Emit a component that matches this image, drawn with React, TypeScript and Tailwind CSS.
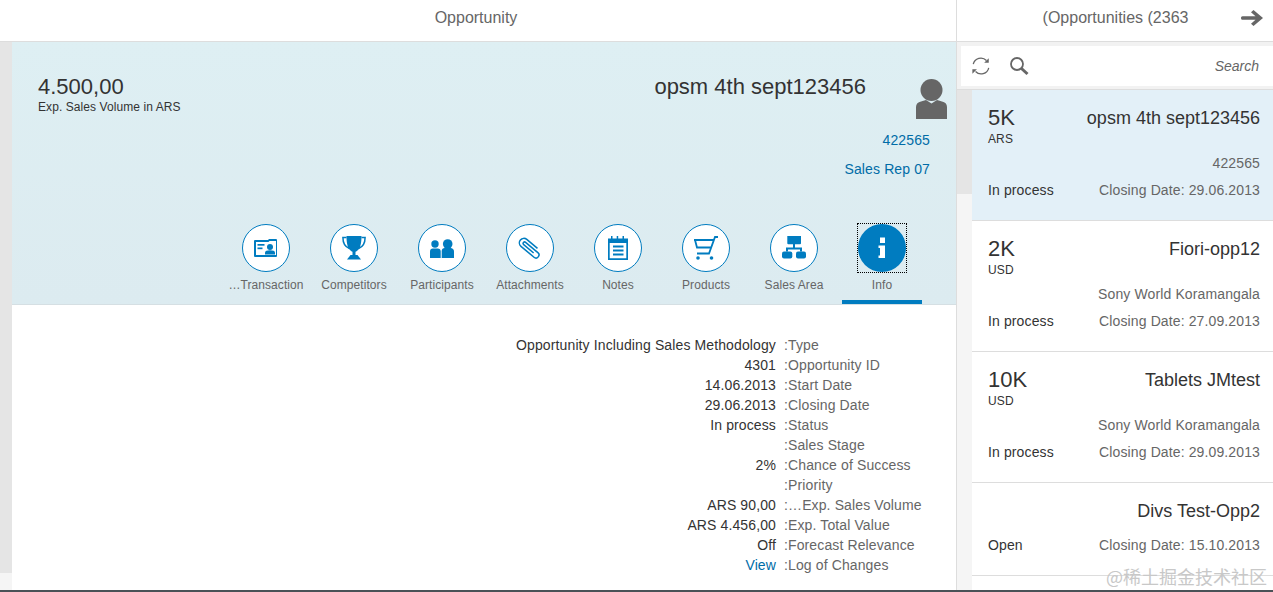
const BLUE = "#007cc0";

function CardIcon() {
  return (
    <svg viewBox="0 0 24 24" className="h-6 w-6" fill={BLUE}>
      <path fillRule="evenodd" d="M1 4h13l1-1h7a1 1 0 0 1 1 1v16a1 1 0 0 1-1 1H1a1 1 0 0 1-1-1V5a1 1 0 0 1 1-1zm1 2v13h20V5h-6.500l-1 1z" />
      <rect x="3.500" y="8" width="7" height="1.700" />
      <rect x="3.500" y="11.500" width="5" height="1.700" />
      <circle cx="16" cy="11" r="3" />
      <path d="M11 18.500v-2c0-1.500 2-2.300 5-2.300s5 .8 5 2.300v2z" />
    </svg>
  );
}

function TrophyIcon() {
  return (
    <svg viewBox="0 0 24 24" className="h-6 w-6" fill={BLUE}>
      <path d="M4.500 0h15c0 6-.8 11-3 13.500-1 1.200-2.200 2-3 2.300V19h-3v-3.200c-.8-.3-2-1.100-3-2.300C5.300 11 4.500 6 4.500 0z" />
      <path d="M8.500 19h7l3.500 4.500H5z" />
      <path d="M4.500 1.500H.9c0 5.500 2.500 9.500 6.500 11M19.500 1.500h3.600c0 5.500-2.500 9.500-6.500 11" fill="none" stroke={BLUE} strokeWidth="1.500" />
    </svg>
  );
}

function PeopleIcon() {
  return (
    <svg viewBox="0 0 24 24" className="h-6 w-6" fill={BLUE}>
      <circle cx="5" cy="8" r="3.700" />
      <circle cx="17.700" cy="8" r="4.800" />
      <path d="M0 22v-6.500c0-1.800 1-3 2.800-3h5c1.800 0 2.900 1.200 2.900 3V22z" />
      <path d="M11.700 22v-7c0-1.800 1.300-3 3-3h5.800c2 0 3.500 1.300 3.500 3.300V22z" />
    </svg>
  );
}

function ClipIcon() {
  return (
    <svg viewBox="-12 -12 24 24" className="h-6 w-6" fill="none" stroke={BLUE} strokeWidth="1.500">
      <path transform="rotate(40)" d="M6 1.500H-7a1.500 1.500 0 0 1 0-3H9a3 3 0 0 1 0 6H-8a4.500 4.500 0 0 1 0-9H6" />
    </svg>
  );
}

function NoteIcon() {
  return (
    <svg viewBox="0 0 24 24" className="h-6 w-6" fill={BLUE}>
      <path fillRule="evenodd" d="M2 2.500h3V0h1.500v2.500h4.200V0h1.500v2.500h4.300V0H18v2.500h4V24H2zM3.700 7v15.300h16.600V7z" />
      <rect x="7" y="9.500" width="10.500" height="2" />
      <rect x="7" y="13.500" width="10.500" height="2" />
      <rect x="7" y="17.500" width="10.500" height="2" />
    </svg>
  );
}

function CartIcon() {
  return (
    <svg viewBox="0 0 24 24" className="h-6 w-6" fill={BLUE}>
      <path d="M0 4h19.500M1 4l2 7.500h14.500M3 17.500h12L21 1h3" fill="none" stroke={BLUE} strokeWidth="1.800" />
      <circle cx="4" cy="22" r="1.800" />
      <circle cx="17.500" cy="22" r="1.800" />
    </svg>
  );
}

function OrgIcon() {
  return (
    <svg viewBox="0 1 24 24" className="h-6 w-6" fill={BLUE}>
      <rect x="5.300" y="0" width="13.700" height="9.300" rx="1" />
      <rect x="0" y="16.500" width="10.300" height="7" rx="2" />
      <rect x="14" y="16.500" width="10" height="7" rx="2" />
      <path d="M11 9h2v3.500h7v4h-2v-2H6v2H4v-4h7z" />
    </svg>
  );
}

function InfoIcon() {
  return (
    <svg viewBox="0 0 24 24" className="h-6 w-6" fill="#fff">
      <rect x="10" y="1.500" width="5" height="5.500" />
      <path d="M8.500 9.500H15V22H8.500v-2.500H10V12H8.500z" />
    </svg>
  );
}

function Person() {
  return (
    <svg viewBox="0 0 31 40" className="h-10 w-[31px]" fill="#666">
      <circle cx="15.500" cy="11" r="11" />
      <path d="M0 40V28c0-3 2-5 5-5.500l5-1.500 5.500 3.500 5.500-3.500 5 1.500c3 .5 5 2.500 5 5.500v12z" />
    </svg>
  );
}

const tabs = [
  { label: "…Transaction", Icon: CardIcon },
  { label: "Competitors", Icon: TrophyIcon },
  { label: "Participants", Icon: PeopleIcon },
  { label: "Attachments", Icon: ClipIcon },
  { label: "Notes", Icon: NoteIcon },
  { label: "Products", Icon: CartIcon },
  { label: "Sales Area", Icon: OrgIcon },
];

const info = [
  ["Opportunity Including Sales Methodology", ":Type"],
  ["4301", ":Opportunity ID"],
  ["14.06.2013", ":Start Date"],
  ["29.06.2013", ":Closing Date"],
  ["In process", ":Status"],
  ["", ":Sales Stage"],
  ["2%", ":Chance of Success"],
  ["", ":Priority"],
  ["ARS 90,00", ":…Exp. Sales Volume"],
  ["ARS 4.456,00", ":Exp. Total Value"],
  ["Off", ":Forecast Relevance"],
  ["View", ":Log of Changes"],
];

const opps = [
  { amt: "5K", cur: "ARS", name: "opsm 4th sept123456", sub: "422565", status: "In process", date: "29.06.2013", active: true },
  { amt: "2K", cur: "USD", name: "Fiori-opp12", sub: "Sony World Koramangala", status: "In process", date: "27.09.2013" },
  { amt: "10K", cur: "USD", name: "Tablets JMtest", sub: "Sony World Koramangala", status: "In process", date: "29.09.2013" },
];

export default function App() {
  return (
    <div className="relative flex h-[592px] w-[1273px] overflow-hidden border-b-2 border-[#4a5257] bg-white font-['Liberation_Sans',Arial,sans-serif] text-[14px] tracking-[0.12px] text-[#333]">
      <main className="flex w-[956px] flex-col">
        <div className="flex h-[42px] shrink-0 items-center justify-center border-b border-[#dddddd] pb-[6px] pr-[4px] text-[16px] tracking-normal text-[#666]">
          Opportunity
        </div>
        <div className="flex min-h-0 flex-1">
          <div className="flex w-3 shrink-0 flex-col bg-[#e5e5e5]">
            <div className="flex-1" />
            <div className="h-[17px] bg-[#f5f5f5]" />
          </div>
          <div className="flex min-w-0 flex-1 flex-col">
            <section className="flex h-[263px] shrink-0 flex-col border-b border-[#d5dfe3] bg-gradient-to-b from-[#deeff3] to-[#dcebf0]">
              <div className="flex flex-1 justify-between pl-[26px] pr-[9px] pt-[32px]">
                <div>
                  <div className="text-[22px] leading-[26px] tracking-normal">4.500,00</div>
                  <div className="text-[12px] leading-[14px] tracking-[0.08px]">Exp. Sales Volume in ARS</div>
                </div>
                <div className="flex flex-col items-end">
                  <div className="flex items-start gap-[50px]">
                    <div className="text-[22px] leading-[26px] tracking-normal">opsm 4th sept123456</div>
                    <div className="mt-[5px]">
                      <Person />
                    </div>
                  </div>
                  <div className="mr-[17px] mt-[13px] leading-[16px] text-[#006ca7]">422565</div>
                  <div className="mr-[17px] mt-[13px] leading-[16px] text-[#006ca7]">Sales Rep 07</div>
                </div>
              </div>
              <div className="flex h-[80px] shrink-0 justify-end gap-2 pr-[34px]">
                {tabs.map(({ label, Icon }) => (
                  <div key={label} className="flex w-[80px] flex-col items-center">
                    <div className="flex h-12 w-12 items-center justify-center rounded-full border border-[#007cc0] bg-white">
                      <Icon />
                    </div>
                    <div className="mt-[6px] text-[12px] leading-[14px] tracking-[0.08px] text-[#666]">{label}</div>
                  </div>
                ))}
                <div className="flex w-[80px] flex-col items-center border-b-4 border-[#007cc0]">
                  <div className="h-12 w-12 outline-1 outline-offset-0 outline-black outline-dotted">
                    <div className="flex h-12 w-12 items-center justify-center rounded-full bg-[#007cc0]">
                      <InfoIcon />
                    </div>
                  </div>
                  <div className="mt-[6px] text-[12px] leading-[14px] tracking-[0.08px] text-[#666]">Info</div>
                </div>
              </div>
            </section>
            <section className="grid grid-cols-[772px_1fr] pt-[30px] leading-[20px]">
              {info.map(([value, label]) => (
                <div key={label} className="contents">
                  <div className={value === "View" ? "pr-[8px] text-right text-[#006ca7]" : "pr-[8px] text-right"}>{value}</div>
                  <div className="text-[#666]">{label}</div>
                </div>
              ))}
            </section>
          </div>
        </div>
      </main>

      <aside className="flex min-w-0 flex-1 flex-col border-l border-[#dddddd]">
        <div className="relative flex h-[42px] shrink-0 items-center justify-center border-b border-[#dddddd] pb-[6px] pl-[1px] text-[16px] tracking-normal text-[#666]">
          (Opportunities (2363
          <svg viewBox="0 0 22 16" className="absolute right-[10px] top-[10px] h-[16px] w-[22px]" fill="#666">
            <path d="M12.500 0 22 8l-9.500 8-2.500-2.300 4.500-3.900h-13C.5 9.800 0 9 0 8s.5-1.800 1.500-1.800h13L10 2.300z" />
          </svg>
        </div>
        <div className="shrink-0 border-b border-[#dddddd] bg-[#f2f2f2] pb-[3px] pl-1 pt-[4px]">
          <div className="flex h-[40px] items-center bg-white pl-[10px] pr-[14px]">
            <svg viewBox="0 0 22 22" className="h-[20px] w-[20px]" fill="none" stroke="#666" strokeWidth="1.400">
              <path d="M2.500 9A8.500 8.500 0 0 1 17 5" />
              <path d="M19.500 13A8.500 8.500 0 0 1 5 17" />
              <path d="M19.500 2.500v5h-5z" fill="#666" stroke="none" />
              <path d="M1.500 19.500v-5h5z" fill="#666" stroke="none" />
            </svg>
            <svg viewBox="0 0 20 20" className="ml-[18px] h-[20px] w-[20px]" fill="none" stroke="#666">
              <circle cx="8" cy="8" r="6" strokeWidth="1.800" />
              <path d="m12.500 12.500 6 5.500" strokeWidth="3" />
            </svg>
            <div className="flex-1 text-right italic tracking-normal text-[#666]">Search</div>
          </div>
        </div>
        <div className="flex min-h-0 flex-1">
          <div className="flex w-[15px] shrink-0 flex-col bg-[#f5f5f5]">
            <div className="h-[104px] bg-[#e5e5e5]" />
          </div>
          <div className="min-w-0 flex-1">
            {opps.map((o) => (
              <div
                key={o.name}
                className={`h-[131px] border-b border-[#dddddd] pl-[16px] pr-[13px] pt-[15px] ${o.active ? "bg-[#e3f0f8]" : "bg-white"}`}
              >
                <div className="flex justify-between">
                  <div className="text-[22px] leading-[26px] tracking-normal">{o.amt}</div>
                  <div className="pt-[2px] text-[18px] leading-[22px] tracking-normal">{o.name}</div>
                </div>
                <div className="mt-[1px] text-[12px] leading-[14px]">{o.cur}</div>
                <div className="mt-[9px] text-right leading-[16px] text-[#666]">{o.sub}</div>
                <div className="mt-[11px] flex justify-between leading-[16px]">
                  <span>{o.status}</span>
                  <span className="text-[#666]">Closing Date: {o.date}</span>
                </div>
              </div>
            ))}
            <div className="h-[93px] border-b border-[#dddddd] pl-[16px] pr-[13px] pt-[17px]">
              <div className="text-right text-[18px] leading-[22px] tracking-normal">Divs Test-Opp2</div>
              <div className="mt-[15px] flex justify-between leading-[16px]">
                <span>Open</span>
                <span className="text-[#666]">Closing Date: 15.10.2013</span>
              </div>
            </div>
          </div>
        </div>
      </aside>

      <div className="absolute bottom-[2px] right-[6px] font-['Noto_Sans_CJK_SC',sans-serif] text-[18px] leading-[24px] tracking-normal text-[#c8c8c8]">
        @稀土掘金技术社区
      </div>
    </div>
  );
}
